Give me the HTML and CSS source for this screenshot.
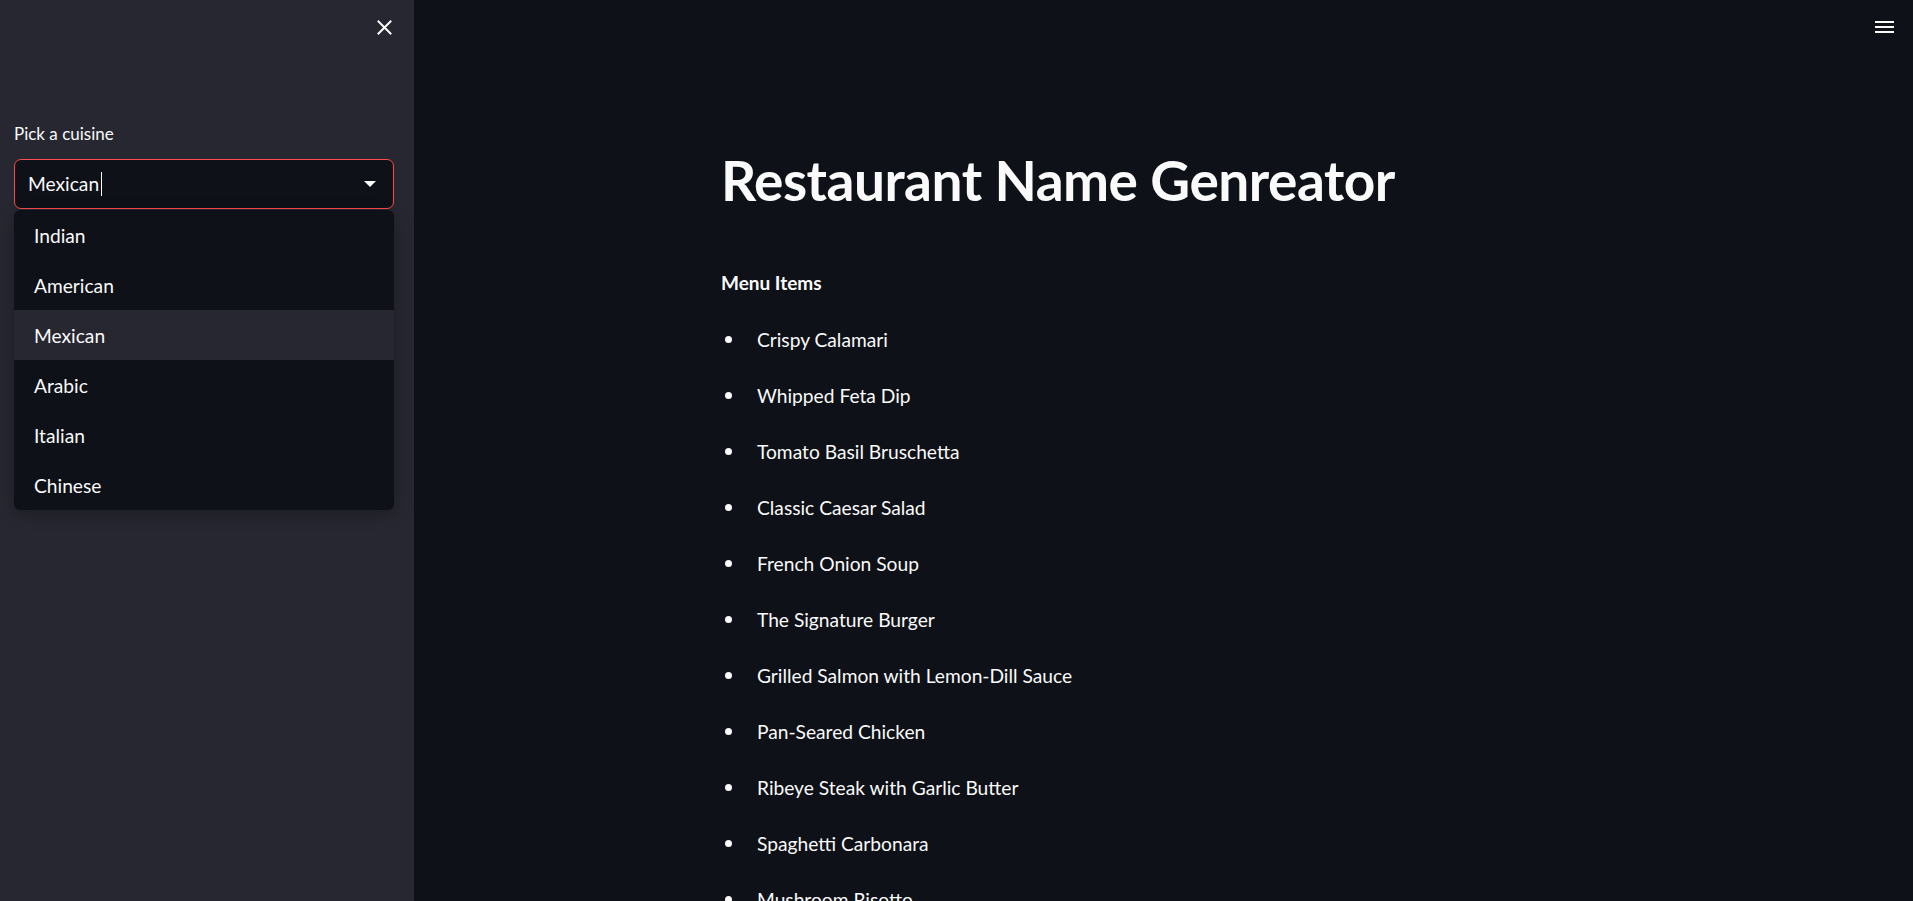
FILE: index.html
```html
<!DOCTYPE html>
<html lang="en">
<head>
<meta charset="utf-8">
<title>Restaurant Name Genreator</title>
<link rel="stylesheet" href="styles.css">
</head>
<body>
<div class="app">
  <aside class="sidebar">
    <div class="sidebar-top">
      <button class="close-btn" aria-label="Close sidebar">
        <svg width="15" height="15" viewBox="0 0 15 15"><path d="M1.5 1.5 L13.5 13.5 M13.5 1.5 L1.5 13.5" stroke="#fafafa" stroke-width="2" stroke-linecap="square"/></svg>
      </button>
    </div>
    <div class="field">
      <label class="field-label">Pick a cuisine</label>
      <div class="select">
        <span class="select-value">Mexican</span><span class="caret"></span>
        <svg class="select-arrow" width="12" height="6" viewBox="0 0 12 6"><path d="M0 0 H12 L6 6 Z" fill="#fafafa"/></svg>
      </div>
      <ul class="options">
        <li class="option">Indian</li>
        <li class="option">American</li>
        <li class="option active">Mexican</li>
        <li class="option">Arabic</li>
        <li class="option">Italian</li>
        <li class="option">Chinese</li>
      </ul>
    </div>
  </aside>
  <main class="main">
    <header class="toolbar">
      <button class="menu-btn" aria-label="Menu">
        <svg width="19" height="14" viewBox="0 0 19 14"><rect x="0" y="1" width="19" height="2" fill="#fafafa"/><rect x="0" y="6" width="19" height="2" fill="#fafafa"/><rect x="0" y="11" width="19" height="2" fill="#fafafa"/></svg>
      </button>
    </header>
    <section class="content">
      <h1 class="title">Restaurant Name Genreator</h1>
      <p class="subhead">Menu Items</p>
      <ul class="menu-list">
        <li>Crispy Calamari</li>
        <li>Whipped Feta Dip</li>
        <li>Tomato Basil Bruschetta</li>
        <li>Classic Caesar Salad</li>
        <li>French Onion Soup</li>
        <li>The Signature Burger</li>
        <li>Grilled Salmon with Lemon-Dill Sauce</li>
        <li>Pan-Seared Chicken</li>
        <li>Ribeye Steak with Garlic Butter</li>
        <li>Spaghetti Carbonara</li>
        <li>Mushroom Risotto</li>
      </ul>
    </section>
  </main>
</div>
</body>
</html>
```
FILE: styles.css
```css
* { box-sizing: border-box; }
html, body {
  margin: 0;
  padding: 0;
  height: 100%;
  overflow: hidden;
}
body {
  background: #0e1117;
  color: #fafafa;
  font-family: "Source Sans Pro", Lato, "Noto Sans", sans-serif;
}
.app {
  display: flex;
  height: 901px;
}
.sidebar {
  width: 414px;
  flex: none;
  background: #262730;
  padding: 0 20px 0 14px;
}
.sidebar-top {
  display: flex;
  justify-content: flex-end;
  padding-top: 20px;
  height: 105px;
}
.close-btn, .menu-btn {
  background: none;
  border: 0;
  padding: 0;
  width: 15px;
  height: 15px;
  display: flex;
  cursor: pointer;
}
.close-btn { margin-right: 2px; }
.field-label {
  display: block;
  font-size: 17px;
  line-height: 24px;
  height: 24px;
  margin-top: 17px;
  margin-bottom: 13px;
}
.select {
  height: 50px;
  border: 1px solid #ff4b4b;
  border-radius: 7px;
  background: #0e1117;
  display: flex;
  align-items: center;
  padding: 0 17px 0 13px;
  font-size: 19.2px;
}
.select-value { line-height: 1; }
.caret {
  width: 1px;
  height: 24px;
  background: #fafafa;
  margin-left: 2px;
}
.select-arrow { margin-left: auto; }
.options {
  list-style: none;
  margin: 1px 0 0;
  padding: 0;
  background: #0e1117;
  border-radius: 6px;
  overflow: hidden;
  box-shadow: 0 4px 16px rgba(0,0,0,0.25);
}
.option {
  height: 50px;
  display: flex;
  align-items: center;
  padding-left: 20px;
  font-size: 19.2px;
}
.option.active { background: #262730; }
.main {
  flex: 1;
  display: flex;
  flex-direction: column;
  position: relative;
}
.toolbar {
  height: 40px;
  display: flex;
  justify-content: flex-end;
  padding: 20px 19px 0 0;
}
.menu-btn { width: 19px; height: 14px; }
.content {
  width: 885px;
  margin: 0 auto;
}
.title {
  margin: 113px 0 0;
  font-size: 55px;
  font-weight: 700;
  line-height: 66px;
  letter-spacing: -0.5px;
}
.subhead {
  margin: 58px 0 0;
  font-size: 19px;
  font-weight: 700;
  line-height: 24px;
}
.menu-list {
  list-style: none;
  margin: 16px 0 0;
  padding: 0;
}
.menu-list li {
  display: flex;
  align-items: center;
  height: 56px;
  font-size: 19.2px;
}
.menu-list li::before {
  content: "";
  width: 7px;
  height: 7px;
  border-radius: 50%;
  background: #fafafa;
  margin-left: 4px;
  margin-right: 25px;
  flex: none;
}
```
